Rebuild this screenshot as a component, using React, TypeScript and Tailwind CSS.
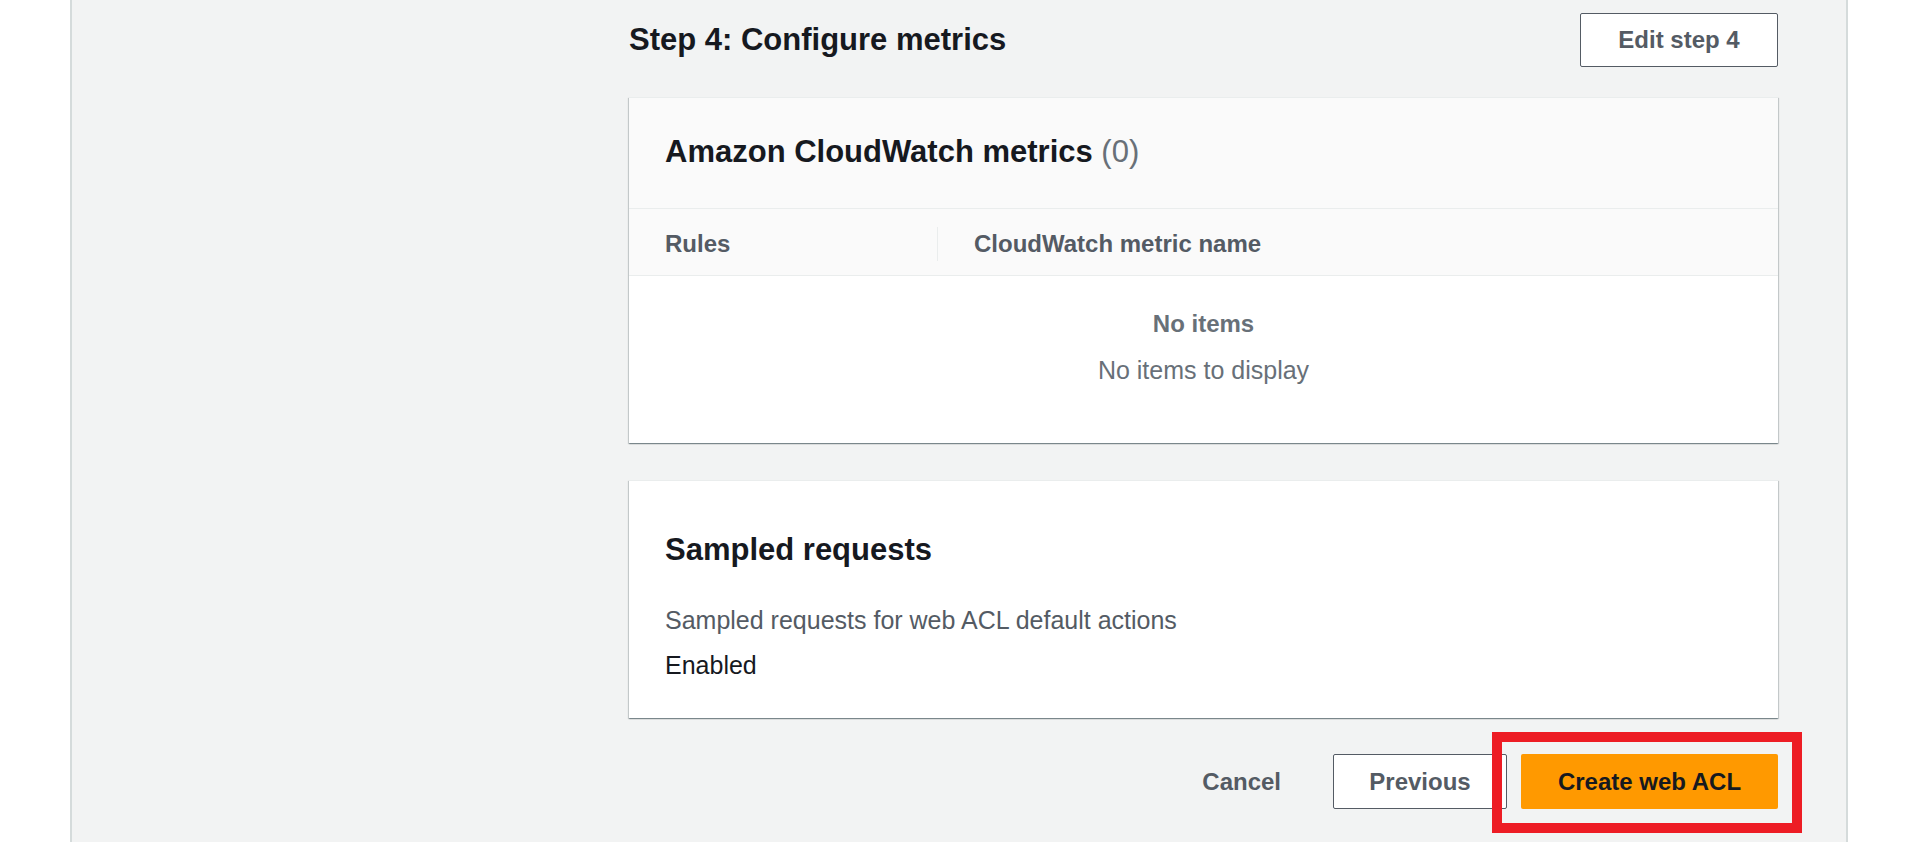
export default function App() {
  return (
    <div className="flex h-[842px] overflow-hidden bg-white font-['Liberation_Sans',Arial,sans-serif] text-[24px] leading-[28px] text-[#16191f] antialiased">
      <div className="w-[70px] shrink-0 bg-white" />
      <main className="flex flex-1 border-x-2 border-[#d5dbdb] bg-[#f2f3f3] pl-[557px] pr-[68px] pt-[13px]">
        <div className="flex flex-1 flex-col">
          {/* step header */}
          <div className="flex h-[54px] items-center justify-between">
            <h2 className="text-[31px] font-bold leading-[36px]">Step 4: Configure metrics</h2>
            <button className="h-[54px] w-[198px] rounded-[2px] border border-[#545b64] bg-white font-bold text-[#545b64]">
              Edit step 4
            </button>
          </div>

          {/* cloudwatch metrics */}
          <section className="mt-[30px] border-t border-[#eaeded] bg-white shadow-[0_1px_1px_0_rgba(0,28,36,0.3),1px_1px_1px_0_rgba(0,28,36,0.15),-1px_1px_1px_0_rgba(0,28,36,0.15)]">
            <div className="border-b border-[#eaeded] bg-[#fafafa] px-[36px] pb-[38px] pt-[36px]">
              <h2 className="text-[31px] font-bold leading-[36px]">
                Amazon CloudWatch metrics <span className="font-normal text-[#687078]">(0)</span>
              </h2>
            </div>
            <div className="flex h-[67px] items-center border-b border-[#eaeded] bg-[#fafafa] pt-[3px] font-bold text-[#545b64]">
              <div className="w-[308px] pl-[36px]">Rules</div>
              <div className="h-[34px] w-px bg-[#eaeded]" />
              <div className="pl-[36px]">CloudWatch metric name</div>
            </div>
            <div className="flex flex-col items-center pb-[59px] pt-[34px] text-[#687078]">
              <p className="font-bold">No items</p>
              <p className="mt-[18px] text-[25px]">No items to display</p>
            </div>
          </section>

          {/* sampled requests */}
          <section className="mt-[37px] border-t border-[#eaeded] bg-white px-[36px] pb-[39px] pt-[51px] shadow-[0_1px_1px_0_rgba(0,28,36,0.3),1px_1px_1px_0_rgba(0,28,36,0.15),-1px_1px_1px_0_rgba(0,28,36,0.15)]">
            <h2 className="text-[31px] font-bold leading-[36px]">Sampled requests</h2>
            <p className="mt-[38px] text-[25px] text-[#545b64]">Sampled requests for web ACL default actions</p>
            <p className="mt-[17px] text-[25px]">Enabled</p>
          </section>

          {/* actions */}
          <div className="mt-[36px] flex items-center justify-end">
            <button className="mr-[52px] font-bold text-[#545b64]">Cancel</button>
            <button className="h-[55px] w-[174px] rounded-[2px] border border-[#545b64] bg-white font-bold text-[#545b64]">
              Previous
            </button>
            <div className="relative ml-[14px]">
              <button className="h-[55px] w-[257px] rounded-[2px] bg-[#ff9900] font-bold text-[#16191f]">
                Create web ACL
              </button>
              <div className="pointer-events-none absolute -bottom-[24px] -left-[29px] -right-[24px] -top-[22px] border-[10px] border-[#ed1c24]" />
            </div>
          </div>
        </div>
      </main>
      <div className="w-[70px] shrink-0 bg-white" />
    </div>
  );
}
